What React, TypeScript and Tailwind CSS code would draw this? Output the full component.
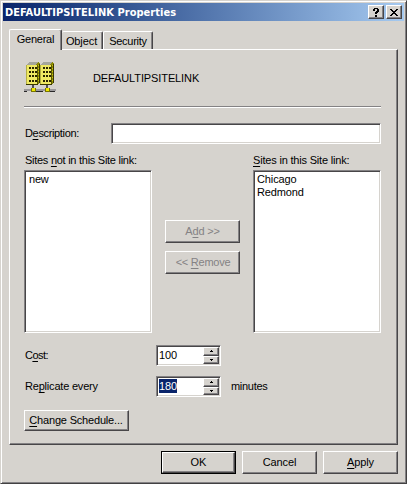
import type { ReactNode } from 'react';

const raised =
  'border border-t-white border-l-white border-r-[#484648] border-b-[#484648] shadow-[inset_-1px_-1px_0_#848284]';
const sunken =
  'border border-t-[#848284] border-l-[#848284] border-r-white border-b-white shadow-[inset_1px_1px_0_#484648,inset_-1px_-1px_0_#d6d3ce]';

function Key({ children }: { children: ReactNode }) {
  return <span className="underline decoration-1 underline-offset-2">{children}</span>;
}

function Button({ children, className = '' }: { children: ReactNode; className?: string }) {
  return (
    <button type="button" className={`flex shrink-0 items-center justify-center whitespace-nowrap bg-[#d6d3ce] ${raised} ${className}`}>
      {children}
    </button>
  );
}

function Arrow({ up }: { up?: boolean }) {
  return (
    <span className={`flex h-[9px] w-full items-center justify-center bg-[#d6d3ce] ${raised}`}>
      <svg width="3" height="2" viewBox="0 0 3 2" shapeRendering="crispEdges">
        <path d={up ? 'M1 0h1v1h1v1H0V1h1z' : 'M0 0h3v1H2v1H1V1H0z'} />
      </svg>
    </span>
  );
}

function Spinner({ value, selected }: { value: string; selected?: boolean }) {
  return (
    <div className={`flex h-[21px] w-[65px] shrink-0 bg-white p-px ${sunken}`}>
      <div className="flex-1 pt-px pl-px leading-[14px]">
        <span className={`inline-block h-[14px] w-[18px] tracking-[-0.1px] ${selected ? 'bg-[#0a246a] text-white' : ''}`}>{value}</span>
      </div>
      <div className="flex w-4 flex-col">
        <Arrow up />
        <Arrow />
      </div>
    </div>
  );
}

function Building({ x }: { x: number }) {
  return (
    <g transform={`translate(${x} 0)`}>
      <path d="M0 3h1V2h1V1h1V0h10v1h1v20h-1v1h-1v1H0z" fill="#8c8908" />
      <path d="M1 2h1V1h1V0h9v1h-1v1h-1v1H1z" fill="#a5a69c" />
      <path d="M1 3h10v19H1z" fill="#efe963" />
      <path d="M0 3h1v19H0z" fill="#b5af42" />
      <path d="M11 3h1v19h-1z" fill="#5a5800" />
      <path d="M12 3h1v1h-1zM12 6h1v1h-1zM12 9h1v1h-1zM12 12h1v1h-1zM12 15h1v1h-1zM12 18h1v1h-1z" fill="#cec700" />
      <path d="M0 22h12v1H0zM13 2h1v19h-1z" fill="#393800" />
      {[5, 9, 13, 18].map((y) => (
        <path key={y} d={`M3 ${y}h2v2H3zM6 ${y}h2v2H6zM9 ${y}h2v2H9z`} fill="#292400" />
      ))}
      <path d="M6 23h2v3H6z" fill="#525152" />
      <path d="M5 26h5v4H5z" fill="#777400" />
      <path d="M6 26h3v3H6z" fill="#efe800" />
    </g>
  );
}

function SiteIcon() {
  return (
    <svg width="32" height="32" viewBox="0 0 32 32" shapeRendering="crispEdges" className="shrink-0">
      <path d="M0 27h32v2H0z" fill="#9c9a9c" />
      <path d="M0 29h3v1H0zM11 29h8v1h-8zM25 29h6v1h-6z" fill="#292829" />
      <Building x={2} />
      <Building x={16} />
    </svg>
  );
}

export default function App() {
  return (
    <main className="h-[484px] w-[407px] overflow-hidden border border-t-[#d6d3ce] border-l-[#d6d3ce] border-r-[#424142] border-b-[#424142] bg-[#d6d3ce] pt-[2px] pl-[2px] font-['Liberation_Sans',sans-serif] text-[11px] leading-[13px] text-black shadow-[inset_1px_1px_0_white,inset_-1px_-1px_0_#848284]">
      <header className="flex h-[18px] w-[401px] items-center bg-linear-to-r from-[#0a246a] to-[#a6caf0] pr-[2px] pl-[2px] text-white">
        <h1 className="flex-1 whitespace-nowrap font-['DejaVu_Sans_Condensed','DejaVu_Sans',sans-serif] text-[11px] font-bold tracking-[0.04px] [font-stretch:condensed]">
          DEFAULTIPSITELINK Properties
        </h1>
        <Button className="mr-[2px] h-[14px] w-4">
          <svg width="7" height="9" viewBox="0 0 7 9" shapeRendering="crispEdges">
            <path d="M1 0h4v1h1v3H5v1H4v1H2V4h1V3h1V1H2v2H0V1h1zM2 7h2v2H2z" />
          </svg>
        </Button>
        <Button className="h-[14px] w-4">
          <svg width="8" height="7" viewBox="0 0 8 7" shapeRendering="crispEdges">
            <path d="M0 0h2v1h1v1h2V1h1V0h2v1H7v1H6v1H5v1h1v1h1v1h1v1H6V6H5V5H3v1H2v1H0V6h1V5h1V4h1V3H2V2H1V1H0z" />
          </svg>
        </Button>
      </header>

      <nav className="mt-2 ml-[6px] flex h-5 items-end">
        <div className="z-10 -mb-px flex h-[21px] w-[53px] justify-center rounded-t-[2px] border-t border-r border-l border-t-white border-l-white border-r-[#484648] bg-[#d6d3ce] pt-[3px] shadow-[inset_-1px_0_0_#848284]">
          <span className="tracking-[-0.25px]">General</span>
        </div>
        <div className="flex h-[18px] w-[41px] justify-center rounded-t-[2px] border-t border-r border-t-white border-r-[#484648] pt-[3px] pr-px shadow-[inset_-1px_0_0_#848284]">
          <span className="tracking-[-0.1px]">Object</span>
        </div>
        <div className="flex h-[18px] w-[50px] justify-center rounded-t-[2px] border-t border-r border-l border-t-white border-l-white border-r-[#484648] pt-[3px] shadow-[inset_-1px_0_0_#848284]">
          <span className="tracking-[-0.25px]">Security</span>
        </div>
      </nav>

      <section className={`ml-[6px] h-[396px] w-[389px] pl-[14px] ${raised}`}>
        <div className="flex h-[57px] w-[357px] items-start border-b border-[#848284] pt-3 shadow-[0_1px_0_white]">
          <SiteIcon />
          <span className="mt-[10px] ml-[37px] tracking-[-0.11px]">DEFAULTIPSITELINK</span>
        </div>

        <div className="mt-4 flex h-[21px] w-[357px] items-center">
          <label className="w-[87px] pl-px tracking-[-0.35px]">D<Key>e</Key>scription:</label>
          <div className={`h-[21px] flex-1 bg-white ${sunken}`} />
        </div>

        <div className="mt-[9px] flex w-[357px]">
          <div className="w-[128px] shrink-0">
            <div className="h-[17px] whitespace-nowrap pl-px pt-px tracking-[-0.27px]">Sites <Key>n</Key>ot in this Site link:</div>
            <div className={`h-[163px] bg-white pt-[2px] pl-1 tracking-[-0.2px] ${sunken}`}>new</div>
          </div>
          <div className="ml-[13px] flex w-[75px] flex-col gap-2 pt-[67px] text-[#848284] [text-shadow:1px_1px_0_white]">
            <Button className="h-[23px]"><span className="tracking-[-0.2px]">A<Key>d</Key>d &gt;&gt;</span></Button>
            <Button className="h-[23px]"><span className="pl-px tracking-[-0.25px]">&lt;&lt; <Key>R</Key>emove</span></Button>
          </div>
          <div className="ml-[13px] w-[128px] shrink-0">
            <div className="h-[17px] whitespace-nowrap pt-px tracking-[-0.19px]"><Key>S</Key>ites in this Site link:</div>
            <div className={`h-[163px] bg-white pt-[2px] pl-[3px] tracking-[-0.12px] ${sunken}`}>
              <div>Chicago</div>
              <div>Redmond</div>
            </div>
          </div>
        </div>

        <div className="mt-3 flex h-[21px] items-center">
          <label className="w-[132px] pl-px tracking-[-0.55px]">C<Key>o</Key>st:</label>
          <Spinner value="100" />
        </div>
        <div className="mt-[10px] flex h-[21px] items-center">
          <label className="w-[132px] pl-px tracking-[-0.2px]">Re<Key>p</Key>licate every</label>
          <Spinner value="180" selected />
          <span className="ml-[10px] tracking-[-0.3px]">minutes</span>
        </div>
        <Button className="mt-[13px] h-[21px] w-[105px]"><span className="mr-px tracking-[-0.18px]"><Key>C</Key>hange Schedule...</span></Button>
      </section>

      <footer className="mt-[6px] flex w-[395px] justify-end gap-[6px]">
        <div className="-mr-px border border-black">
          <Button className="h-[21px] w-[73px]">OK</Button>
        </div>
        <Button className="ml-px h-[23px] w-[75px]"><span className="tracking-[-0.15px]">Cancel</span></Button>
        <Button className="h-[23px] w-[75px]"><span className="tracking-[-0.15px]"><Key>A</Key>pply</span></Button>
      </footer>
    </main>
  );
}
